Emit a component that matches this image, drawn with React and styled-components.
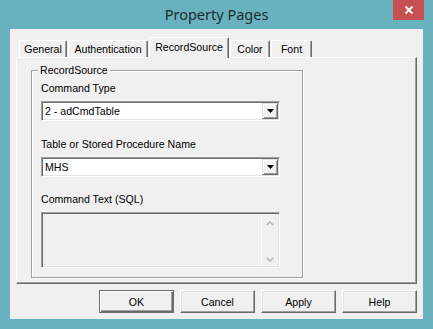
import React from 'react';
import styled, { createGlobalStyle, css } from 'styled-components';

const Global = createGlobalStyle`
  html, body { margin: 0; padding: 0; background: #6ab1bf; overflow: hidden; }
  body { font-family: "Liberation Sans", Arial, sans-serif; }
  * { box-sizing: border-box; }
`;

const Window = styled.div`
  width: 433px;
  height: 329px;
  background: #6ab1bf;
  display: flex;
  flex-direction: column;
`;

const TitleBar = styled.div`
  flex: none;
  height: 29px;
  display: grid;
  grid-template-columns: 1fr auto 1fr;
  align-items: start;
`;

const Title = styled.div`
  grid-column: 2;
  font-family: "Noto Sans", "Open Sans", sans-serif;
  font-size: 14.5px;
  line-height: 29px;
  color: #1e2d30;
  white-space: nowrap;
`;

const CloseButton = styled.div`
  grid-column: 3;
  justify-self: end;
  margin-right: 9px;
  width: 31px;
  height: 20px;
  background: #c75050;
  display: flex;
  align-items: center;
  justify-content: center;
`;

const Client = styled.div`
  flex: 1;
  margin: 0 10px 10px;
  background: #f0f0f0;
  padding: 8px 6px 6px;
  display: flex;
  flex-direction: column;
`;

const TabStrip = styled.div`
  height: 20px;
  margin-left: 3px;
  display: flex;
  align-items: flex-end;
  gap: 1px;
`;

const Tab = styled.div`
  width: ${p => p.$w}px;
  height: 17px;
  background: #f0f0f0;
  border-top: 1px solid #fff;
  border-left: 1px solid #fff;
  border-right: 1px solid #696969;
  border-top-left-radius: 2px;
  border-top-right-radius: 2px;
  box-shadow: inset -1px 0 #a0a0a0;
  font-size: 10.6px;
  line-height: 16px;
  text-align: center;
  color: #000;
  white-space: nowrap;
  ${p => p.$active && css`
    height: 21px;
    margin-bottom: -1px;
    position: relative;
    z-index: 1;
    line-height: 18px;
  `}
`;

const Panel = styled.div`
  height: 227px;
  border-top: 1px solid #fff;
  border-left: 1px solid #fff;
  border-right: 1px solid #696969;
  border-bottom: 1px solid #696969;
  box-shadow: inset -1px -1px #a0a0a0;
  padding: 12px 0 0 14px;
`;

const Group = styled.div`
  width: 272px;
  height: 208px;
  border: 1px solid #a0a0a0;
  box-shadow: inset 1px 1px #fff, 1px 1px #fff;
  padding: 0 0 0 9px;
  display: flex;
  flex-direction: column;
  align-items: flex-start;
`;

const Legend = styled.div`
  margin: -7px 0 0 -3px;
  padding: 0 2px;
  background: #f0f0f0;
  font-size: 10.6px;
  line-height: 13px;
  color: #000;
  white-space: nowrap;
`;

const Field = styled.div`
  display: flex;
  flex-direction: column;
  gap: 6px;
  margin-top: ${p => p.$top}px;
`;

const Label = styled.div`
  font-size: 10.6px;
  line-height: 13px;
  color: #000;
  white-space: nowrap;
`;

const Sunken = css`
  width: 239px;
  border: 1px solid;
  border-color: #a0a0a0 #fff #fff #a0a0a0;
  box-shadow: inset 1px 1px #696969, inset -1px -1px #e3e3e3;
  padding: 1px;
  display: flex;
`;

const Combo = styled.div`
  ${Sunken}
  height: 20px;
  background: #fff;
  align-items: stretch;
`;

const ComboText = styled.div`
  flex: 1;
  padding-left: 2px;
  font-size: 10.6px;
  line-height: 16px;
  color: #000;
  white-space: nowrap;
`;

const DropButton = styled.div`
  width: 16px;
  background: #f0f0f0;
  border: 1px solid;
  border-color: #e3e3e3 #696969 #696969 #e3e3e3;
  box-shadow: inset 1px 1px #fff, inset -1px -1px #a0a0a0;
  display: flex;
  align-items: center;
  justify-content: center;
`;

const TextBox = styled.div`
  ${Sunken}
  height: 56px;
  background: #f0f0f0;
  justify-content: flex-end;
`;

const ScrollColumn = styled.div`
  width: 17px;
  border-left: 1px solid #fff;
  display: flex;
  flex-direction: column;
  justify-content: space-between;
  align-items: center;
  padding: 7px 0 4px;
`;

const ButtonRow = styled.div`
  margin-top: 6px;
  display: flex;
  justify-content: flex-end;
  gap: 6px;
`;

const Button = styled.button`
  width: 75px;
  height: 23px;
  padding: 0;
  font-family: inherit;
  font-size: 10.6px;
  color: #000;
  background: #f0f0f0;
  border: 1px solid;
  border-color: #fff #696969 #696969 #fff;
  box-shadow: inset -1px -1px #a0a0a0, inset 1px 1px #e3e3e3;
  ${p => p.$default && css`
    border-color: #6d6d6d;
    box-shadow: inset 1px 1px #fff, inset -1px -1px #696969, inset -2px -2px #a0a0a0;
  `}
`;

const Arrow = () => (
  <svg width="7" height="4" viewBox="0 0 7 4">
    <polygon points="0,0 7,0 3.5,4" fill="#000" />
  </svg>
);

const Chevron = ({ up }) => (
  <svg width="8" height="5" viewBox="0 0 8 5">
    <polyline
      points={up ? '0.7,4.3 4,1 7.3,4.3' : '0.7,0.7 4,4 7.3,0.7'}
      fill="none"
      stroke="#b8b8b8"
      strokeWidth="1.6"
    />
  </svg>
);

const tabs = [
  { label: 'General', w: 48 },
  { label: 'Authentication', w: 80 },
  { label: 'RecordSource', w: 80, active: true },
  { label: 'Color', w: 40 },
  { label: 'Font', w: 41 },
];

export default function App() {
  return (
    <>
      <Global />
      <Window>
        <TitleBar>
          <Title>Property Pages</Title>
          <CloseButton>
            <svg width="10" height="10" viewBox="0 0 10 10">
              <path d="M1.5 1.5 L8.5 8.5 M8.5 1.5 L1.5 8.5" stroke="#fff" strokeWidth="1.8" />
            </svg>
          </CloseButton>
        </TitleBar>
        <Client>
          <TabStrip>
            {tabs.map(t => (
              <Tab key={t.label} $w={t.w} $active={t.active}>{t.label}</Tab>
            ))}
          </TabStrip>
          <Panel>
            <Group>
              <Legend>RecordSource</Legend>
              <Field $top={5}>
                <Label>Command Type</Label>
                <Combo>
                  <ComboText>2 - adCmdTable</ComboText>
                  <DropButton><Arrow /></DropButton>
                </Combo>
              </Field>
              <Field $top={17}>
                <Label>Table or Stored Procedure Name</Label>
                <Combo>
                  <ComboText>MHS</ComboText>
                  <DropButton><Arrow /></DropButton>
                </Combo>
              </Field>
              <Field $top={16}>
                <Label>Command Text (SQL)</Label>
                <TextBox>
                  <ScrollColumn>
                    <Chevron up />
                    <Chevron />
                  </ScrollColumn>
                </TextBox>
              </Field>
            </Group>
          </Panel>
          <ButtonRow>
            <Button $default>OK</Button>
            <Button>Cancel</Button>
            <Button>Apply</Button>
            <Button>Help</Button>
          </ButtonRow>
        </Client>
      </Window>
    </>
  );
}
